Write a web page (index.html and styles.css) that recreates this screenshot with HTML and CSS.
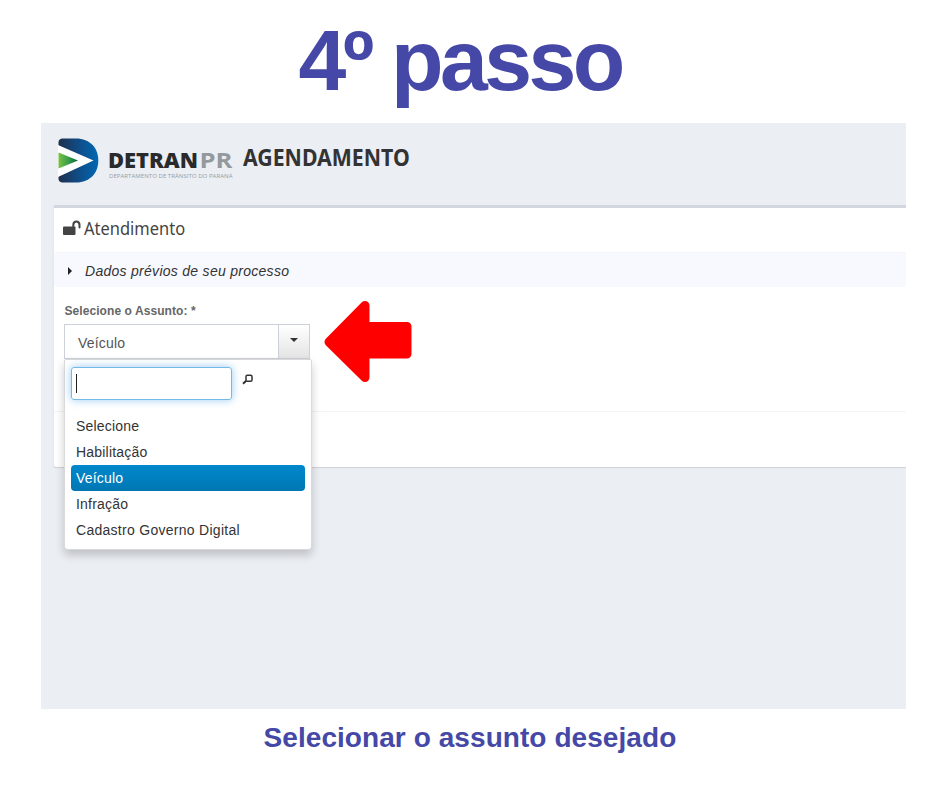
FILE: index.html
```html
<!DOCTYPE html>
<html lang="pt-BR">
<head>
<meta charset="utf-8">
<title>4º passo</title>
<link rel="stylesheet" href="styles.css">
</head>
<body>
<h1 class="step-title">4º passo</h1>
<main class="screen">
  <header class="brand">
    <svg class="logo" width="178" height="48" viewBox="0 0 178 48" role="img" aria-label="Detran PR">
      <defs>
        <linearGradient id="blue" x1="0" y1="0" x2="1" y2="0">
          <stop offset="0" stop-color="#20304c"/><stop offset=".55" stop-color="#0e4f8c"/><stop offset="1" stop-color="#0068b3"/>
        </linearGradient>
        <linearGradient id="green" x1="0" y1="0" x2="1" y2="0">
          <stop offset="0" stop-color="#7ac143"/><stop offset=".5" stop-color="#3a9f48"/><stop offset="1" stop-color="#00683c"/>
        </linearGradient>
      </defs>
      <path d="M4 1.500H18C32 1.500 40.300 11 40.300 23.500S32 45.500 18 45.500H4Q.5 45 .5 41.500V5.500Q.5 2 4 1.500Z" fill="url(#blue)"/>
      <path d="M0 8 35.500 23.500 0 40Z" fill="#fff"/>
      <path d="M.5 15.500 20 23.500 .5 31.500Z" fill="url(#green)"/>
      <text class="logo-name" x="50" y="31" textLength="90" lengthAdjust="spacingAndGlyphs">DETRAN</text>
      <text class="logo-state" x="141.500" y="31" textLength="33" lengthAdjust="spacingAndGlyphs">PR</text>
      <text class="logo-sub" x="51" y="41" textLength="123.500" lengthAdjust="spacingAndGlyphs">DEPARTAMENTO DE TRÂNSITO DO PARANÁ</text>
    </svg>
    <h2 class="app-title">AGENDAMENTO</h2>
  </header>
  <section class="panel">
    <div class="panel-head">
      <svg class="lock" width="19" height="17" viewBox="0 0 19 17">
        <rect x="0" y="6.500" width="12.500" height="8.500" rx="1" fill="#444"/>
        <path d="M10.300 8V5C10.300 .3 16.500 .3 16.500 5V7.500" fill="none" stroke="#444" stroke-width="2" stroke-linecap="round"/>
      </svg>
      <span class="panel-title">Atendimento</span>
    </div>
    <div class="accordion"><i class="caret-right"></i><span class="accordion-text">Dados prévios de seu processo</span></div>
    <div class="form">
      <div class="label">Selecione o Assunto: *</div>
      <div class="select">
        <span class="value">Veículo</span>
        <span class="toggle"><i class="caret-down"></i></span>
        <div class="menu">
          <div class="search">
            <div class="field"><i class="cursor"></i></div>
            <svg width="11" height="11" viewBox="0 0 11 11" fill="none" stroke="#333">
              <rect x="4" y="1.200" width="6" height="6" rx="1.300" stroke-width="1.500"/>
              <path d="M4.200 6.800 1 9.800" stroke-width="2"/>
            </svg>
          </div>
          <ul class="options">
            <li>Selecione</li>
            <li>Habilitação</li>
            <li class="active">Veículo</li>
            <li>Infração</li>
            <li class="wide">Cadastro Governo Digital</li>
          </ul>
        </div>
      </div>
    </div>
    <div class="panel-foot"></div>
  </section>
  <svg class="pointer" width="88" height="82" viewBox="0 0 88 82">
    <path d="M5 41 41 4.500V25.500H83V53H41V76.500Z" fill="red" stroke="red" stroke-width="9" stroke-linejoin="round"/>
  </svg>
</main>
<p class="caption">Selecionar o assunto desejado</p>
</body>
</html>
```
FILE: styles.css
```css
* { box-sizing: border-box; }
body { margin: 0; background: #fff; font-family: "Liberation Sans", Arial, sans-serif; }
h1, h2, p, ul { margin: 0; padding: 0; }
.step-title { height: 123px; padding-left: 298.5px; font-size: 86px; line-height: 120px; letter-spacing: -3.55px; color: #4548a6; white-space: nowrap; }
.screen { position: relative; width: 865px; height: 586px; margin-left: 41px; background: #ebeef3; overflow: hidden; }
.brand { display: flex; height: 82px; padding: 14px 0 0 17px; }
.logo { flex: none; overflow: visible; }
.logo-name { font: 800 21px "Open Sans", sans-serif; fill: #292a2c; }
.logo-state { font: 700 21px "Open Sans", sans-serif; fill: #93999d; }
.logo-sub { font: 6px "Open Sans", sans-serif; fill: #9a9da1; }
.app-title { margin: 0 0 0 6.5px; font: 700 23px/41px "Noto Sans", sans-serif; color: #333; transform-origin: left; transform: scaleX(.925); }
.panel { margin-left: 12px; height: 262px; background: #fff; border-top: 3px solid #d2d6de; border-left: 1px solid #e5e8ed; border-radius: 3px 0 0 3px; box-shadow: 0 1px 1px rgba(0,0,0,.12); }
.panel-head { display: flex; height: 45px; padding: 12px 0 0 9px; border-bottom: 1px solid #f4f4f4; }
.panel-title { margin: -5px 0 0 2px; font: 18px/26px "Noto Sans", sans-serif; color: #444; transform-origin: left; transform: scaleX(.915); }
.accordion { display: flex; align-items: center; height: 34px; padding: 2px 0 0 14px; background: #f8f8ff; border-radius: 4px 0 0 4px; font-size: 14px; font-style: italic; color: #333; }
.caret-right { border: 4px solid transparent; border-left-color: #222; border-right: 0; }
.accordion-text { margin-left: 13px; letter-spacing: .28px; }
.form { height: 125px; padding: 17px 0 0 10.5px; border-bottom: 1px solid #f4f4f4; }
.label { height: 20px; font-size: 12px; line-height: 14px; font-weight: 700; color: #666; letter-spacing: .07px; }
.select { position: relative; display: flex; width: 246px; height: 35px; margin-left: -.5px; border: 1px solid #ccd0d8; background: #fff; font-size: 14px; color: #555; }
.value { flex: 1; padding-left: 13px; line-height: 36px; letter-spacing: .2px; }
.toggle { width: 31px; border-left: 1px solid #ccd0d8; background: linear-gradient(#fff, #e4e4e4); padding: 13px 0 0 11px; }
.caret-down { display: block; width: 0; border: 4px solid transparent; border-top-color: #333; border-bottom: 0; }
.menu { position: absolute; top: 34px; left: -1px; width: 248px; height: 191px; padding: 7px 6px 6px; border: 1px solid #d9d9d9; border-radius: 2px 2px 4px 4px; background: #fff; box-shadow: 0 5px 10px rgba(0,0,0,.2); }
.search { display: flex; gap: 10px; height: 46px; }
.search svg { margin-top: 7px; }
.field { width: 161px; height: 33px; padding: 6px 4px; border: 1px solid #74b9e7; border-radius: 3px; box-shadow: 0 0 8px rgba(82,168,236,.6); }
.cursor { display: block; width: 1px; height: 19px; background: #222; }
.options { list-style: none; color: #333; }
.options li { height: 26px; padding-left: 5px; border-radius: 4px; line-height: 26px; letter-spacing: .2px; }
.options .wide { letter-spacing: .28px; }
.options .active { color: #fff; background: linear-gradient(#08c, #0077b3); }
.pointer { position: absolute; left: 283px; top: 178px; }
.caption { padding-left: 263.5px; margin-top: 12px; font-size: 28px; line-height: 34px; font-weight: 700; letter-spacing: .07px; color: #4548a6; white-space: nowrap; }
```
